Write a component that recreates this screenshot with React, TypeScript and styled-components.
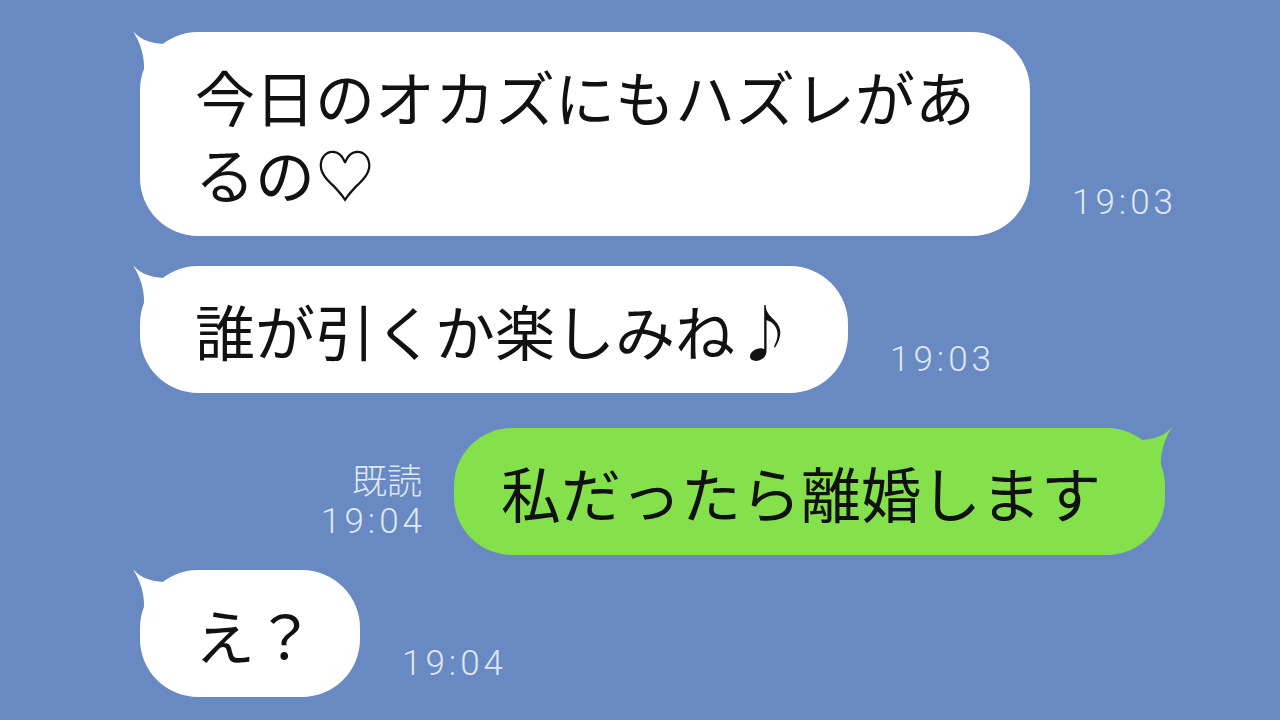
import * as React from 'react';
import styled, { createGlobalStyle } from 'styled-components';

const GlobalStyle = createGlobalStyle`
  html, body {
    margin: 0;
    padding: 0;
    background: #6889c1;
  }
  body {
    font-family: "Noto Sans CJK JP", "Noto Sans", sans-serif;
  }
`;

const Screen = styled.div`
  width: 1280px;
  height: 720px;
  overflow: hidden;
  background: #6889c1;
  box-sizing: border-box;
  padding-top: 32px;
  display: flex;
  flex-direction: column;
`;

const Row = styled.div<{ $mine?: boolean; $top: number }>`
  display: flex;
  align-items: flex-end;
  justify-content: ${({ $mine }) => ($mine ? 'flex-end' : 'flex-start')};
  gap: ${({ $mine }) => ($mine ? '32px' : '42px')};
  margin-top: ${({ $top }) => $top}px;
  padding: ${({ $mine }) => ($mine ? '0 115px 0 0' : '0 0 0 140px')};
`;

const Bubble = styled.div<{ $mine?: boolean; $max?: number; $padL: number; $padR: number }>`
  position: relative;
  box-sizing: border-box;
  max-width: ${({ $max }) => ($max ? `${$max}px` : 'none')};
  padding: 25px ${({ $padR }) => $padR}px 25px ${({ $padL }) => $padL}px;
  border-radius: 58px;
  background: ${({ $mine }) => ($mine ? '#85e14b' : '#ffffff')};
  color: #111;
  font-family: "Noto Sans CJK JP", sans-serif;
  font-size: 60px;
  line-height: 77px;
  word-break: break-all;
`;

const TailSvg = styled.svg<{ $mine?: boolean }>`
  position: absolute;
  top: -8px;
  width: 50px;
  height: 50px;
  ${({ $mine }) => ($mine ? 'right: -12px; transform: scaleX(-1);' : 'left: -12px;')}
`;

const Tail = ({ mine }: { mine?: boolean }) => (
  <TailSvg $mine={mine} viewBox="-12 -8 50 50">
    <path
      d="M -10 -5 C -3 6, 8 12, 28 12 L 28 42 L 4 42 C 5 24, 1 10, -10 -5 Z"
      fill={mine ? '#85e14b' : '#ffffff'}
    />
  </TailSvg>
);

const Meta = styled.div<{ $mine?: boolean }>`
  display: flex;
  flex-direction: column;
  align-items: ${({ $mine }) => ($mine ? 'flex-end' : 'flex-start')};
  margin-bottom: 12px;
  color: #dfe7f5;
  font-family: Roboto, "Liberation Sans", "Noto Sans CJK JP", sans-serif;
  font-weight: 300;
  font-size: 35px;
  line-height: 43px;
`;

const Read = styled.span`
  font-family: "Noto Sans CJK JP", sans-serif;
  font-size: 35px;
`;

const Time = styled.span`
  letter-spacing: 4px;
  margin-right: -4px;
`;

interface Msg {
  text: string;
  time: string;
  mine?: boolean;
  read?: boolean;
  top: number;
  max?: number;
  padL?: number;
  padR?: number;
}

const messages: Msg[] = [
  { text: '今日のオカズにもハズレがあるの♡', time: '19:03', top: 0, max: 890, padR: 52 },
  { text: '誰が引くか楽しみね♪', time: '19:03', top: 30 },
  { text: '私だったら離婚します', time: '19:04', mine: true, read: true, top: 35, padL: 47, padR: 64 },
  { text: 'え？', time: '19:04', top: 15, padR: 45 },
];

export default function App() {
  return (
    <>
      <GlobalStyle />
      <Screen>
        {messages.map((m, i) => {
          const meta = (
            <Meta $mine={m.mine}>
              {m.read ? <Read>既読</Read> : null}
              <Time>{m.time}</Time>
            </Meta>
          );
          return (
            <Row key={i} $mine={m.mine} $top={m.top}>
              {m.mine ? meta : null}
              <Bubble
                $mine={m.mine}
                $max={m.max}
                $padL={m.padL ?? 55}
                $padR={m.padR ?? 53}
              >
                <Tail mine={m.mine} />
                {m.text}
              </Bubble>
              {m.mine ? null : meta}
            </Row>
          );
        })}
      </Screen>
    </>
  );
}
